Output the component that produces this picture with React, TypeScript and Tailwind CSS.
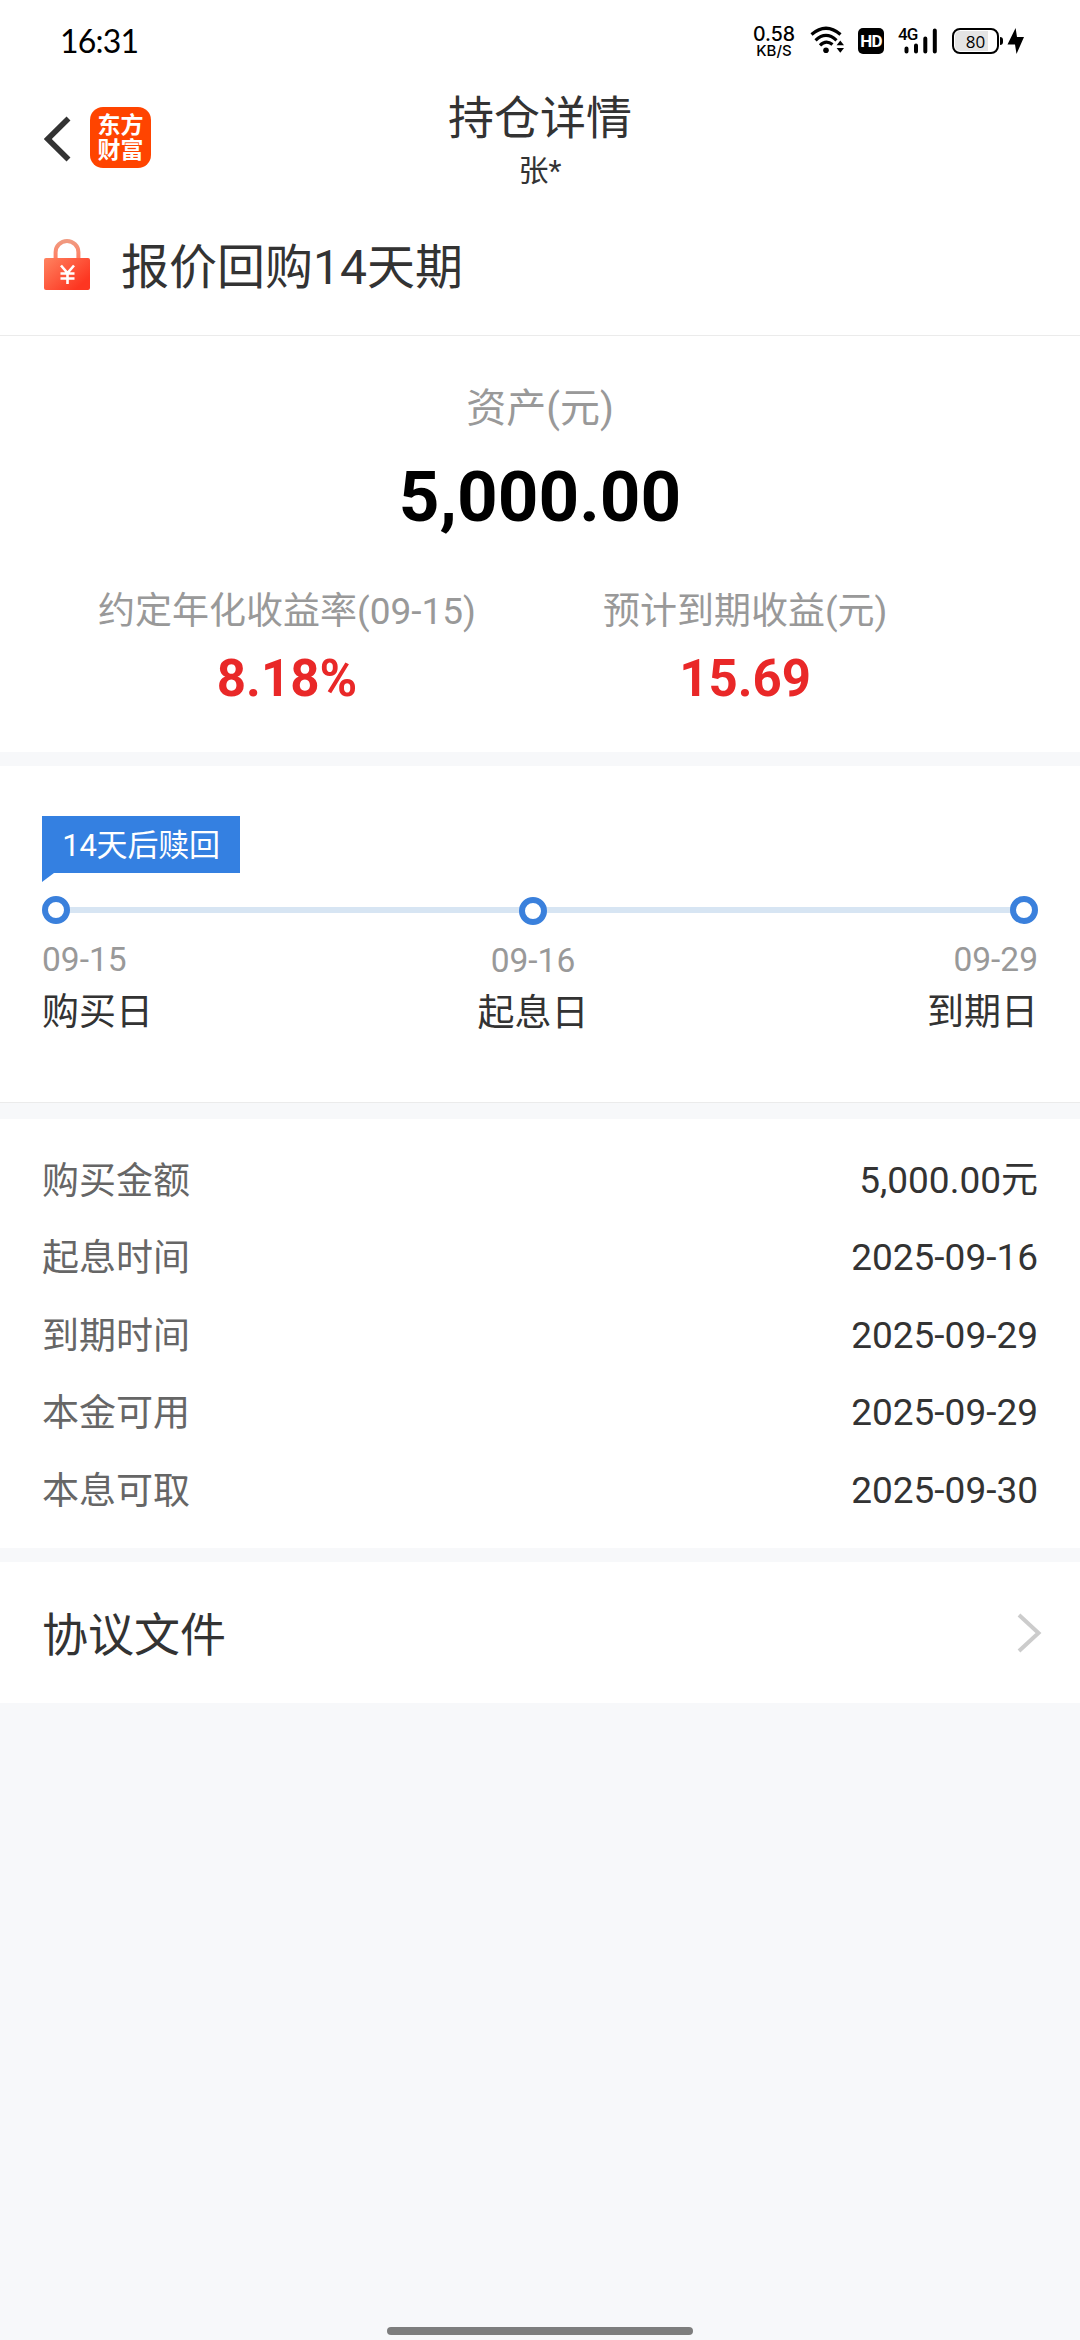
import type { ReactNode } from 'react'

const FONT = "font-['Roboto','Noto_Sans_CJK_SC',sans-serif]"

const details = [
  { label: '购买金额', value: '5,000.00元' },
  { label: '起息时间', value: '2025-09-16' },
  { label: '到期时间', value: '2025-09-29' },
  { label: '本金可用', value: '2025-09-29' },
  { label: '本息可取', value: '2025-09-30' },
]

function WifiIcon() {
  return (
    <svg width="36" height="28" viewBox="0 0 36 28" fill="none" stroke="#000">
      <path d="M1.5 8.5 Q16 -4 30.5 8.5" strokeWidth="3.2" />
      <path d="M5.5 14.3 Q16 4.5 26.5 14.3" strokeWidth="3.2" />
      <path d="M10 19.3 Q16 13.3 22.5 18.5" strokeWidth="3.2" />
      <circle cx="16" cy="24.2" r="2.8" fill="#000" stroke="none" />
      <path d="M26.6 19.2 L30.3 14.4 L34 19.2 Z" fill="#000" stroke="none" />
      <path d="M26.6 22 L30.3 26.8 L34 22 Z" fill="#000" stroke="none" />
    </svg>
  )
}

function SignalIcon() {
  return (
    <svg width="34" height="26" viewBox="0 0 34 26" stroke="#000" strokeWidth="4" strokeLinecap="round">
      <path d="M3.5 20.5V23.5M13 17.5V23.5M22.3 10.5V23.5M31.8 2.5V23.5" />
    </svg>
  )
}

function StatusBar() {
  return (
    <div className="flex h-[82px] items-start pl-[60px] pt-[22px] text-black">
      <span className="w-[693px] font-['Lato'] text-[32px] leading-[37px] tracking-[-0.8px]">16:31</span>
      <div className="flex w-[42px] flex-col items-center pt-[3px] font-['Inter'] font-medium">
        <span className="text-[19.5px] leading-[18px]">0.58</span>
        <span className="text-[15px] leading-[15px]">KB/S</span>
      </div>
      <div className="ml-[15px] pt-[4px]">
        <WifiIcon />
      </div>
      <div className="ml-[12px] mt-[6px] flex h-[26px] w-[26px] items-center justify-center rounded-[5px] bg-black">
        <span className="font-['Roboto'] text-[17px] font-bold leading-none tracking-[-0.8px] text-white">HD</span>
      </div>
      <div className="relative ml-[19px] pt-[6px]">
        <SignalIcon />
        <span className="absolute -left-[5px] top-[3px] font-['Roboto'] text-[17px] font-medium leading-[18px] tracking-[-1px]">
          4G
        </span>
      </div>
      <div className="ml-[15px] mt-[6px] flex items-center">
        <div className="relative flex h-[26px] w-[47px] items-center justify-center rounded-[8px] border-[2.5px] border-black">
          <div className="absolute inset-y-[1px] left-[1px] right-[9px] rounded-l-[5px] bg-[#e4e4e4]" />
          <span className="relative font-['Open_Sans'] text-[17px] leading-none">80</span>
        </div>
        <div className="ml-px h-[8px] w-[2.5px] rounded-r bg-black" />
        <svg className="ml-[4px]" width="17" height="26" viewBox="0 0 17 26">
          <path d="M8.6 0 0.5 16.5H8L9.5 26 17 9H10Z" fill="#000" />
        </svg>
      </div>
    </div>
  )
}

function Header() {
  return (
    <header className="grid h-[120px] grid-cols-[300px_1fr_300px] text-[#333]">
      <div className="flex items-start pl-[44px] pt-[25px]">
        <svg className="mt-[9px]" width="28" height="46" viewBox="0 0 28 46" fill="none" stroke="#333">
          <path d="M24.5 2.5 3.8 23 24.5 43.5" strokeWidth="5.6" />
        </svg>
        <div className="ml-[18px] flex h-[61px] w-[61px] flex-col items-center justify-center rounded-[13px] bg-[#ff4400] text-[23px] font-bold leading-[25px] text-white">
          <span>东方</span>
          <span>财富</span>
        </div>
      </div>
      <div className="pt-[6px] text-center">
        <h1 className="text-[46px] leading-[60px]">持仓详情</h1>
        <p className="mt-[3px] text-[30px] leading-[40px]">张*</p>
      </div>
    </header>
  )
}

function LockIcon() {
  return (
    <svg width="46" height="51" viewBox="0 0 46 51" fill="none">
      <defs>
        <linearGradient id="lockBody" x1="0" y1="0" x2="1" y2="0.8">
          <stop offset="0" stopColor="#ff8360" />
          <stop offset="0.9" stopColor="#fd3621" />
        </linearGradient>
        <linearGradient id="lockShackle" x1="0" y1="0" x2="0" y2="1">
          <stop offset="0" stopColor="#f09a80" />
          <stop offset="1" stopColor="#ff7d61" />
        </linearGradient>
      </defs>
      <path d="M11.6 20V13.2a11.4 11.2 0 0 1 22.8 0V20" stroke="url(#lockShackle)" strokeWidth="4" />
      <rect y="19" width="46" height="32" rx="2" fill="url(#lockBody)" />
      <path d="M17 26.5 23.5 34 30 26.5M23.5 34V45M16.5 34.5H30.5M16.5 39.5H30.5" stroke="#fff" strokeWidth="2.6" />
    </svg>
  )
}

function Yield({ label, value }: { label: string; value: string }) {
  return (
    <div className="text-center">
      <p className="text-[37px] leading-[50px] text-[#999]">{label}</p>
      <p className="mt-[13px] text-[51px] font-bold leading-[58px] text-[#e92828]">{value}</p>
    </div>
  )
}

function Step({ date, name, className }: { date: string; name: string; className: string }) {
  return (
    <div className={`flex flex-col ${className}`}>
      <div className="h-[28px] w-[28px] rounded-full border-[6px] border-[#3a80dc] bg-white" />
      <span className="mt-[16px] text-[33.5px] leading-[40px] text-[#999]">{date}</span>
      <span className="mt-[8px] text-[37px] leading-[50px] text-[#333]">{name}</span>
    </div>
  )
}

function Section({ className, children }: { className: string; children: ReactNode }) {
  return <section className={`bg-white ${className}`}>{children}</section>
}

export default function App() {
  return (
    <div className={`relative h-[2340px] w-[1080px] overflow-hidden bg-[#f7f8fa] ${FONT}`}>
      <Section className="h-[752px]">
        <StatusBar />
        <Header />
        <div className="flex h-[134px] items-center border-b border-[#ebebeb] pl-[44px]">
          <div className="-mt-[8px]">
            <LockIcon />
          </div>
          <h2 className="-mt-[2px] ml-[31px] text-[48px] leading-[60px] text-[#333]">报价回购14天期</h2>
        </div>
        <div className="pt-[48px] text-center">
          <p className="text-[40px] leading-[50px] text-[#999]">资产(元)</p>
          <p className="mt-[21px] text-[71px] font-bold leading-[84px] text-black">5,000.00</p>
        </div>
        <div className="mt-[48px] flex gap-[127px] pl-[98px]">
          <Yield label="约定年化收益率(09-15)" value="8.18%" />
          <Yield label="预计到期收益(元)" value="15.69" />
        </div>
      </Section>

      <Section className="mt-[14px] h-[337px] border-b border-[#ebebeb] px-[42px] pt-[50px]">
        <div className="h-[57px] w-[198px] bg-[#3480e1] text-center text-[31px] leading-[60px] tracking-[-0.2px] text-white">
          14天后赎回
        </div>
        <svg width="12" height="9" viewBox="0 0 12 9" className="block">
          <path d="M0 0H12L0 9Z" fill="#3480e1" />
        </svg>
        <div className="relative mt-[14px]">
          <div className="absolute left-[14px] right-[14px] top-[11px] h-[6px] bg-[#d7e5f3]" />
          <div className="relative grid grid-cols-[111px_1fr_111px]">
            <Step date="09-15" name="购买日" className="items-start" />
            <Step date="09-16" name="起息日" className="items-center pr-[14px] pt-px" />
            <Step date="09-29" name="到期日" className="items-end" />
          </div>
        </div>
      </Section>

      <Section className="mt-[16px] h-[429px] px-[42px] pt-[23px]">
        {details.map((row) => (
          <div key={row.label} className="flex h-[77.5px] items-center justify-between text-[37px] leading-[50px]">
            <span className="pt-[2px] text-[#666]">{row.label}</span>
            <span className="text-[#333]">{row.value}</span>
          </div>
        ))}
      </Section>

      <Section className="mt-[14px] flex h-[141px] items-center justify-between pl-[42px] pr-[38px]">
        <span className="pt-[4px] text-[46px] leading-[60px] text-[#333]">协议文件</span>
        <svg width="25" height="40" viewBox="0 0 25 40" fill="none" stroke="#ccc">
          <path d="M2 2 21.5 20 2 38" strokeWidth="4" />
        </svg>
      </Section>

      <div className="absolute bottom-[5px] left-[387px] h-[8px] w-[306px] rounded-full bg-[#7d7d7d]" />
    </div>
  )
}
